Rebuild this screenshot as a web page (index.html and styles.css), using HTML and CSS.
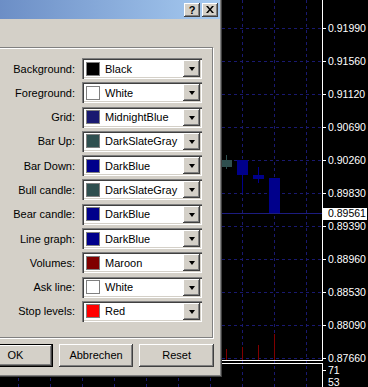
FILE: index.html
```html
<!DOCTYPE html>
<html lang="de">
<head>
  <meta charset="UTF-8" />
  <title>Eigenschaften</title>
  <link rel="stylesheet" href="styles.css">
</head>
<body>
  <svg class="chart" width="368" height="387" viewBox="0 0 368 387">
    <g class="grid">
      <line x1="0" y1="28.5" x2="322" y2="28.5" />
      <line x1="0" y1="61.5" x2="322" y2="61.5" />
      <line x1="0" y1="94.5" x2="322" y2="94.5" />
      <line x1="0" y1="127.5" x2="322" y2="127.5" />
      <line x1="0" y1="160.5" x2="322" y2="160.5" />
      <line x1="0" y1="193.5" x2="322" y2="193.5" />
      <line x1="0" y1="226.5" x2="322" y2="226.5" />
      <line x1="0" y1="259.5" x2="322" y2="259.5" />
      <line x1="0" y1="292.5" x2="322" y2="292.5" />
      <line x1="0" y1="325.5" x2="322" y2="325.5" />
      <line x1="0" y1="358.5" x2="322" y2="358.5" />
      <line x1="18.5" y1="0" x2="18.5" y2="387" />
      <line x1="50.5" y1="0" x2="50.5" y2="387" />
      <line x1="82.5" y1="0" x2="82.5" y2="387" />
      <line x1="114.5" y1="0" x2="114.5" y2="387" />
      <line x1="146.5" y1="0" x2="146.5" y2="387" />
      <line x1="178.5" y1="0" x2="178.5" y2="387" />
      <line x1="210.5" y1="0" x2="210.5" y2="387" />
      <line x1="242.5" y1="0" x2="242.5" y2="387" />
      <line x1="274.5" y1="0" x2="274.5" y2="387" />
      <line x1="306.5" y1="0" x2="306.5" y2="387" />
    </g>

    <!-- bid line -->
    <line x1="0" y1="213.5" x2="322" y2="213.5" stroke="#1c1c80" />

    <!-- candles -->
    <line x1="226.5" y1="155" x2="226.5" y2="169" stroke="#2f4f4f" />
    <rect x="221" y="160" width="11" height="7" fill="#2f4f4f" />
    <line x1="242.5" y1="170" x2="242.5" y2="193" stroke="#00008b" />
    <rect x="237" y="160" width="11" height="15" fill="#00008b" />
    <line x1="258.5" y1="167" x2="258.5" y2="183" stroke="#00008b" />
    <rect x="253" y="175" width="11" height="4" fill="#00008b" />
    <rect x="269" y="178" width="11" height="35" fill="#00008b" />

    <!-- volumes -->
    <g stroke="#800000">
      <line x1="226.5" y1="349" x2="226.5" y2="360" />
      <line x1="242.5" y1="347" x2="242.5" y2="360" />
      <line x1="258.5" y1="345" x2="258.5" y2="360" />
      <line x1="274.5" y1="334" x2="274.5" y2="360" />
    </g>

    <!-- axis -->
    <g stroke="#fff">
      <line x1="322.5" y1="0" x2="322.5" y2="361" />
      <line x1="0" y1="360.5" x2="322" y2="360.5" />
      <line x1="0" y1="363.5" x2="322" y2="363.5" />
      <line x1="322.5" y1="363" x2="322.5" y2="387" />
      <line x1="322" y1="28.5" x2="326" y2="28.5" />
      <line x1="322" y1="61.5" x2="326" y2="61.5" />
      <line x1="322" y1="94.5" x2="326" y2="94.5" />
      <line x1="322" y1="127.5" x2="326" y2="127.5" />
      <line x1="322" y1="160.5" x2="326" y2="160.5" />
      <line x1="322" y1="193.5" x2="326" y2="193.5" />
      <line x1="322" y1="226.5" x2="326" y2="226.5" />
      <line x1="322" y1="259.5" x2="326" y2="259.5" />
      <line x1="322" y1="292.5" x2="326" y2="292.5" />
      <line x1="322" y1="325.5" x2="326" y2="325.5" />
      <line x1="322" y1="358.5" x2="326" y2="358.5" />
      <line x1="322" y1="370.5" x2="326" y2="370.5" />
    </g>
    <g class="prices">
      <text x="328" y="29">0.91990</text>
      <text x="328" y="62">0.91560</text>
      <text x="328" y="95">0.91120</text>
      <text x="328" y="128">0.90690</text>
      <text x="328" y="161">0.90260</text>
      <text x="328" y="194">0.89830</text>
      <text x="328" y="227">0.89390</text>
      <text x="328" y="260">0.88960</text>
      <text x="328" y="293">0.88530</text>
      <text x="328" y="326">0.88090</text>
      <text x="328" y="359">0.87660</text>
      <text x="328" y="371">71</text>
      <text x="328" y="383">53</text>
    </g>
    <rect x="323" y="208" width="44" height="12" fill="#fff" />
    <text class="price-now" x="328" y="214">0.89561</text>
  </svg>

  <div class="dialog">
    <div class="titlebar">
      <span class="cap-btn">?</span>
      <span class="cap-btn">
        <svg width="8" height="7" viewBox="0 0 8 7">
          <path d="M0 0h2l2 2.5 2-2.5h2l-3 3.5 3 3.5h-2l-2-2.5-2 2.5h-2l3-3.5z" fill="#000" />
        </svg>
      </span>
    </div>

    <div class="content">
      <div class="group">
        <span class="label">Background:</span>
        <div class="combo"><span class="swatch" style="background:#000000"></span><span class="value">Black</span><span class="drop"></span></div>
        <span class="label">Foreground:</span>
        <div class="combo"><span class="swatch" style="background:#ffffff"></span><span class="value">White</span><span class="drop"></span></div>
        <span class="label">Grid:</span>
        <div class="combo"><span class="swatch" style="background:#191970"></span><span class="value">MidnightBlue</span><span class="drop"></span></div>
        <span class="label">Bar Up:</span>
        <div class="combo"><span class="swatch" style="background:#2f4f4f"></span><span class="value">DarkSlateGray</span><span class="drop"></span></div>
        <span class="label">Bar Down:</span>
        <div class="combo"><span class="swatch" style="background:#00008b"></span><span class="value">DarkBlue</span><span class="drop"></span></div>
        <span class="label">Bull candle:</span>
        <div class="combo"><span class="swatch" style="background:#2f4f4f"></span><span class="value">DarkSlateGray</span><span class="drop"></span></div>
        <span class="label">Bear candle:</span>
        <div class="combo"><span class="swatch" style="background:#00008b"></span><span class="value">DarkBlue</span><span class="drop"></span></div>
        <span class="label">Line graph:</span>
        <div class="combo"><span class="swatch" style="background:#00008b"></span><span class="value">DarkBlue</span><span class="drop"></span></div>
        <span class="label">Volumes:</span>
        <div class="combo"><span class="swatch" style="background:#800000"></span><span class="value">Maroon</span><span class="drop"></span></div>
        <span class="label">Ask line:</span>
        <div class="combo"><span class="swatch" style="background:#ffffff"></span><span class="value">White</span><span class="drop"></span></div>
        <span class="label">Stop levels:</span>
        <div class="combo"><span class="swatch" style="background:#ff0000"></span><span class="value">Red</span><span class="drop"></span></div>
      </div>

      <div class="buttons">
        <button class="btn btn-default">OK</button>
        <button class="btn">Abbrechen</button>
        <button class="btn">Reset</button>
      </div>
    </div>
  </div>
</body>
</html>
```

FILE: styles.css
```css
html, body {
  margin: 0;
  padding: 0;
  background: #000;
  width: 368px;
  height: 387px;
  overflow: hidden;
  font-family: "Liberation Sans", Arial, sans-serif;
}

.chart {
  display: block;
}

.grid line {
  stroke: #191970;
  stroke-dasharray: 3 3;
}

.prices text,
.price-now {
  font-family: "Liberation Sans", Arial, sans-serif;
  font-size: 10.5px;
  fill: #fff;
  dominant-baseline: middle;
}

.price-now {
  fill: #000;
}

/* dialog window over the chart */
.dialog {
  position: absolute;
  left: -30px;
  top: 0;
  width: 252px;
  height: 377px;
  box-sizing: border-box;
  background: #d4d0c8;
  border-right: 1px solid #404040;
  border-bottom: 1px solid #404040;
  box-shadow: inset -1px -1px #808080;
  padding: 0 1px 1px 0;
}

.titlebar {
  height: 19px;
  background: linear-gradient(to right, #6486c0, #a6caf0);
  display: flex;
  justify-content: flex-end;
  align-items: center;
  gap: 2px;
  padding-right: 2px;
}

.cap-btn {
  width: 16px;
  height: 14px;
  box-sizing: border-box;
  background: #d4d0c8;
  box-shadow: inset -1px -1px #404040, inset 1px 1px #fff, inset -2px -2px #808080;
  display: flex;
  align-items: center;
  justify-content: center;
  font-weight: bold;
  font-size: 11px;
  color: #000;
}

.content {
  padding: 28px 7px 0 8px;
}

.group {
  border: 1px solid #808080;
  box-shadow: 1px 1px 0 #fff, inset 1px 1px 0 #fff;
  padding: 10px 0 15px;
  display: grid;
  grid-template-columns: 96px 120px;
  grid-auto-rows: 21px;
  column-gap: 7px;
  row-gap: 3.3px;
}

.label {
  font-size: 11px;
  color: #000;
  text-align: right;
  align-self: center;
}

.combo {
  display: flex;
  align-items: center;
  box-sizing: border-box;
  padding: 2px;
  background: #fff;
  box-shadow: inset 1px 1px #808080, inset 2px 2px #404040, inset -1px -1px #fff, inset -2px -2px #d4d0c8;
}

.swatch {
  width: 14px;
  height: 14px;
  box-sizing: border-box;
  border: 1px solid #808080;
  margin-left: 2px;
}

.value {
  font-size: 11px;
  color: #000;
  margin-left: 5px;
}

.drop {
  margin-left: auto;
  width: 17px;
  height: 17px;
  box-sizing: border-box;
  background: #d4d0c8;
  box-shadow: inset -1px -1px #404040, inset 1px 1px #fff, inset -2px -2px #808080;
  display: flex;
  align-items: center;
  justify-content: center;
}

.drop::after {
  content: "";
  border-left: 3.5px solid transparent;
  border-right: 3.5px solid transparent;
  border-top: 4px solid #000;
  margin-top: 1px;
}

.buttons {
  display: flex;
  justify-content: flex-end;
  gap: 6px;
  margin-top: 6px;
  margin-right: -1px;
}

.btn {
  width: 75px;
  height: 23px;
  box-sizing: border-box;
  border: none;
  padding: 0;
  background: #d4d0c8;
  box-shadow: inset -1px -1px #404040, inset 1px 1px #fff, inset -2px -2px #808080;
  font-family: "Liberation Sans", Arial, sans-serif;
  font-size: 11px;
  color: #000;
}

.btn-default {
  border: 1px solid #000;
}
```
